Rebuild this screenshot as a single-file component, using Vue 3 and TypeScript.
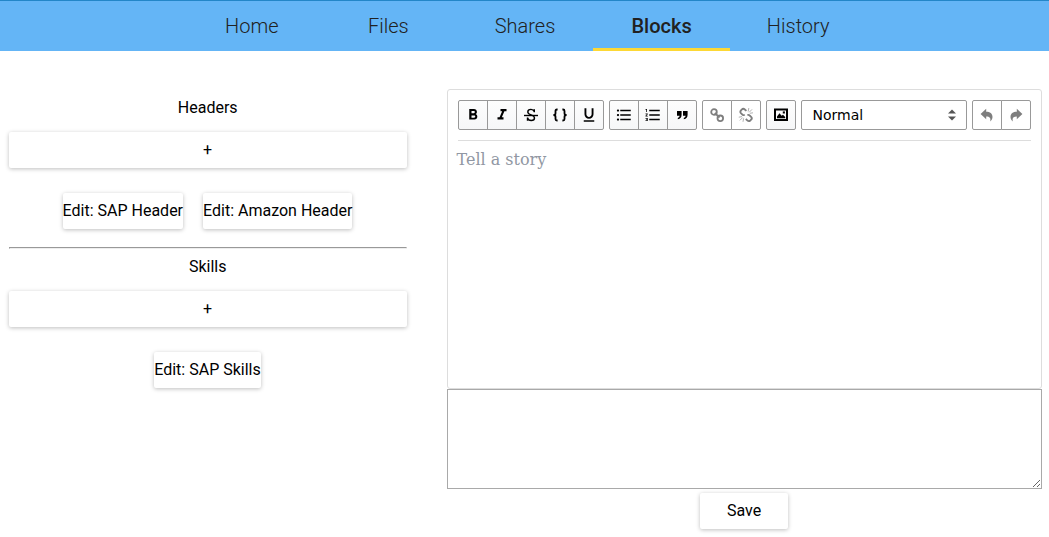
<script setup lang="ts">
interface Icon {
  name: string
  box: string
  paths: string[]
  stroke?: boolean
}
interface Group {
  id: string
  disabled?: boolean
  icons: Icon[]
}

const tabs: string[] = ['Home', 'Files', 'Shares', 'Blocks', 'History']
const active = 'Blocks'

const sections = [
  { title: 'Headers', items: ['Edit: SAP Header', 'Edit: Amazon Header'] },
  { title: 'Skills', items: ['Edit: SAP Skills'] },
]

const m = '0 0 24 24'
const s = '0 0 18 18'

const formatting: Group[] = [
  {
    id: 'inline',
    icons: [
      { name: 'Bold', box: m, paths: ['M15.6 10.79c.97-.67 1.65-1.77 1.65-2.79 0-2.26-1.75-4-4-4H7v14h7.04c2.09 0 3.71-1.7 3.71-3.79 0-1.52-.86-2.82-2.15-3.42zM10 6.5h3c.83 0 1.5.67 1.5 1.5s-.67 1.5-1.5 1.5h-3v-3zm3.5 9H10v-3h3.5c.83 0 1.5.67 1.5 1.5s-.67 1.5-1.5 1.5z'] },
      { name: 'Italic', box: m, paths: ['M10 4v3h2.21l-3.42 8H6v3h8v-3h-2.21l3.42-8H18V4z'] },
      { name: 'Strikethrough', box: s, stroke: true, paths: ['M2 9.5H16', 'M12.3 6.3V3.2M12.2 5.5C11.6 3.9 10.4 3.4 9 3.4C7 3.4 5.8 4.4 5.8 6C5.8 7.7 7.2 8.2 9 8.8C11.2 9.5 12.5 10.2 12.5 12C12.5 13.7 11.1 14.5 9.2 14.5C7.5 14.5 6 13.8 5.6 12M5.5 11.5V14.8'] },
      { name: 'Code', box: s, stroke: true, paths: ['M6.6 3.5H6C4.8 3.5 4.5 3.9 4.5 5V7.2C4.5 8.4 3.8 9 2.4 9C3.8 9 4.5 9.6 4.5 10.8V13C4.5 14.1 4.8 14.5 6 14.5H6.6', 'M11.4 3.5H12C13.2 3.5 13.5 3.9 13.5 5V7.2C13.5 8.4 14.2 9 15.6 9C14.2 9 13.5 9.6 13.5 10.8V13C13.5 14.1 13.2 14.5 12 14.5H11.4'] },
      { name: 'Underline', box: m, paths: ['M12 17c3.31 0 6-2.69 6-6V3h-2.5v8c0 1.93-1.57 3.5-3.5 3.5S8.5 12.93 8.5 11V3H6v8c0 3.31 2.69 6 6 6zm-7 2v2h14v-2H5z'] },
    ],
  },
  {
    id: 'block',
    icons: [
      { name: 'UL', box: m, paths: ['M4 10.5c-.83 0-1.5.67-1.5 1.5s.67 1.5 1.5 1.5 1.5-.67 1.5-1.5-.67-1.5-1.5-1.5zm0-6c-.83 0-1.5.67-1.5 1.5S3.17 7.5 4 7.5 5.5 6.83 5.5 6 4.83 4.5 4 4.5zm0 12c-.83 0-1.5.68-1.5 1.5s.68 1.5 1.5 1.5 1.5-.68 1.5-1.5-.67-1.5-1.5-1.5zM7 19h14v-2H7v2zm0-6h14v-2H7v2zm0-8v2h14V5H7z'] },
      { name: 'OL', box: m, paths: ['M2 17h2v.5H3v1h1v.5H2v1h3v-4H2v1zm1-9h1V4H2v1h1v3zm-1 3h1.8L2 13.1v.9h3v-1H3.2L5 10.9V10H2v1zm5-6v2h14V5H7zm0 14h14v-2H7v2zm0-6h14v-2H7v2z'] },
      { name: 'Blockquote', box: s, paths: ['M4 5H8.6V8.6C8.6 11.5 7.4 13 4.8 13.3V11.9C6 11.5 6.5 10.9 6.6 9.8H4Z', 'M10 5H14.6V8.6C14.6 11.5 13.4 13 10.8 13.3V11.9C12 11.5 12.5 10.9 12.6 9.8H10Z'] },
    ],
  },
  {
    id: 'link',
    disabled: true,
    icons: [
      { name: 'Link', box: s, stroke: true, paths: ['M3.2 6A2.8 2.8 0 1 1 8.8 6A2.8 2.8 0 1 1 3.2 6', 'M9.5 12.3A2.8 2.8 0 1 1 15.1 12.3A2.8 2.8 0 1 1 9.5 12.3', 'M6.8 7L11.6 11.5'] },
      { name: 'Remove Link', box: s, stroke: true, paths: ['M9.4 4.9L7.8 3.5C6.8 2.6 5.6 2.7 4.7 3.6L4 4.4C3.1 5.4 3.2 6.5 4.1 7.4L5.6 8.7C6.3 9.2 7 9.2 7.8 8.8', 'M10.4 9.2C11.1 8.8 12 8.8 12.7 9.5L14.1 10.8C15 11.7 15 12.8 14.1 13.7L13.3 14.5C12.4 15.3 11.2 15.3 10.3 14.4L8.8 13'] },
    ],
  },
  {
    id: 'image',
    icons: [
      { name: 'Image', box: s, paths: ['M2 2.5H16V15H2ZM4 4.5V13H14V4.5Z', 'M5 12.2V10.4L7.5 7.2L9.6 9.8L11 8.8L13.2 11V12.2Z', 'M10.8 5.4H12.9V7.5H10.8Z'] },
    ],
  },
]

const history: Icon[] = [
  { name: 'Undo', box: s, paths: ['M8.2 2.8V5.8C12 5.8 14.5 7.7 14.5 11C14.5 12.8 13.6 14.4 12.2 15.4C12.9 11.8 11.8 10.4 8.2 10.4V13.2L2.6 8Z'] },
  { name: 'Redo', box: s, paths: ['M9.8 2.8V5.8C6 5.8 3.5 7.7 3.5 11C3.5 12.8 4.4 14.4 5.8 15.4C5.1 11.8 6.2 10.4 9.8 10.4V13.2L15.4 8Z'] },
]
</script>

<template>
  <div class="page">
    <nav class="nav">
      <a v-for="t in tabs" :key="t" class="tab" :class="{ active: t === active }">{{ t }}</a>
    </nav>
    <main class="main">
      <aside class="side">
        <section v-for="(sec, i) in sections" :key="sec.title">
          <hr v-if="i > 0" class="rule" />
          <div class="title">{{ sec.title }}</div>
          <button class="raised add">+</button>
          <div class="items">
            <button v-for="item in sec.items" :key="item" class="raised edit">{{ item }}</button>
          </div>
        </section>
      </aside>
      <section class="content">
        <div class="editor">
          <div class="toolbar">
            <div v-for="g in formatting" :key="g.id" class="group">
              <button v-for="ic in g.icons" :key="ic.name" class="tool" :class="{ disabled: g.disabled }" :title="ic.name">
                <svg class="icon" :class="{ line: ic.stroke, chain: g.id === 'link', code: ic.name === 'Code' }" :viewBox="ic.box">
                  <path v-for="p in ic.paths" :key="p" :d="p" fill-rule="evenodd" />
                  <path v-if="ic.name === 'Remove Link'" class="spark" d="M11.2 5.5L11.8 2M12.2 6.3L15 3.4M12.8 7.3L16 6.8M6.6 12.3L6 15.8M5.6 11.6L2.8 14.4M5 10.6L1.8 11.2" />
                </svg>
              </button>
            </div>
            <div class="select">
              <span>Normal</span>
              <svg class="caret" viewBox="0 0 8 12"><path d="M0 4.5L4 .5L8 4.5ZM0 7.5L4 11.5L8 7.5Z" /></svg>
            </div>
            <div class="group">
              <button v-for="ic in history" :key="ic.name" class="tool disabled" :title="ic.name">
                <svg class="icon" :viewBox="ic.box"><path v-for="p in ic.paths" :key="p" :d="p" /></svg>
              </button>
            </div>
          </div>
          <div class="placeholder">Tell a story</div>
        </div>
        <textarea class="source"></textarea>
        <button class="raised save">Save</button>
      </section>
    </main>
  </div>
</template>

<style>
body {
  background: #fff;
  overflow: hidden;
}
</style>

<style scoped>
* {
  box-sizing: border-box;
}
.page {
  height: 537px;
  font: 16px/19px Roboto, sans-serif;
  color: #000;
}
.nav {
  display: flex;
  justify-content: center;
  height: 51px;
  padding-left: 1px;
  border-top: 1px solid #2386c8;
  background: #64b5f6;
}
.tab {
  width: 136.6px;
  height: 50px;
  padding-top: 1px;
  border-bottom: 3px solid transparent;
  font-size: 20px;
  font-weight: 300;
  line-height: 48px;
  text-align: center;
  color: #212121;
}
.tab.active {
  border-color: #fdd835;
  font-weight: 500;
}
.main {
  display: flex;
  gap: 40px;
  padding: 38px 7px 0 9px;
}
.side {
  width: 398px;
  padding-top: 9px;
  text-align: center;
}
.title {
  margin-bottom: 15px;
  padding-right: 0.6px;
}
.raised {
  display: block;
  height: 36px;
  padding: 0;
  border: 0;
  border-radius: 2px;
  background: #fff;
  box-shadow: 0 1px 4px rgba(0, 0, 0, 0.26);
  font: 16px/36px Roboto, sans-serif;
  color: #000;
}
.add {
  width: 100%;
  padding-right: 1px;
}
.items {
  display: flex;
  justify-content: center;
  gap: 20px;
  margin-top: 25px;
  padding-right: 1px;
}
.rule {
  margin: 18px 0 8px;
  border: 1px solid;
  border-color: #999 #eee #eee #999;
}
.content {
  width: 595px;
}
.editor {
  height: 300px;
  border: 1px solid #ddd;
  border-radius: 3px;
  background: #fff;
}
.toolbar {
  display: flex;
  gap: 5px;
  height: 51px;
  margin: 0 10px;
  padding-top: 10px;
  border-bottom: 1px solid #ddd;
}
.group {
  display: flex;
}
.tool {
  display: block;
  width: 30px;
  height: 30px;
  padding: 5px;
  border: 1px solid #999;
  background: linear-gradient(#fdfdfd, #f6f7f8);
}
.tool + .tool {
  margin-left: -1px;
}
.tool:first-child {
  border-radius: 2px 0 0 2px;
}
.tool:last-child {
  border-radius: 0 2px 2px 0;
}
.tool:only-child {
  border-radius: 2px;
}
.tool.disabled {
  background: #fff;
}
.icon {
  display: block;
  width: 18px;
  height: 18px;
}
.disabled .icon {
  opacity: 0.5;
}
.line path {
  fill: none;
  stroke: #000;
  stroke-width: 1.4;
}
.code path {
  stroke-width: 1.8;
}
.chain path {
  stroke-width: 1.8;
}
.chain .spark {
  stroke-width: 0.6;
}
.select {
  display: flex;
  justify-content: space-between;
  align-items: center;
  width: 166px;
  height: 30px;
  padding: 0 10px 0 10.5px;
  border: 1px solid #999;
  border-radius: 2px;
  font: 14px "DejaVu Sans", sans-serif;
}
.caret {
  width: 8px;
  height: 12px;
  fill: #555;
}
.placeholder {
  padding: 9px 8.5px;
  font: 16px/19px "DejaVu Serif", serif;
  color: #9197a3;
}
.source {
  display: block;
  width: 595px;
  height: 100px;
  border: 1px solid #a9a9a9;
  background: #fff;
}
.save {
  width: 88px;
  margin: 4px 0 0 253px;
}
</style>
